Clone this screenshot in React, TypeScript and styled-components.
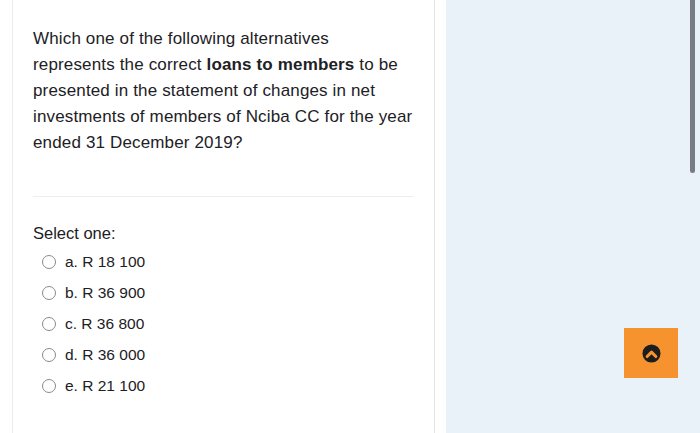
import React from 'react';
import styled, { createGlobalStyle } from 'styled-components';

const GlobalStyle = createGlobalStyle`
  html, body {
    margin: 0;
    padding: 0;
    height: 433px;
    overflow: hidden;
    background: #ffffff;
    font-family: "Liberation Sans", Arial, sans-serif;
    color: #1d2125;
  }
`;

const options = ['a. R 18 100', 'b. R 36 900', 'c. R 36 800', 'd. R 36 000', 'e. R 21 100'];

const App: React.FC = () => {
  return (
    <>
      <GlobalStyle />
      <Page>
        <Main>
          <Card>
            <QuestionText>
              Which one of the following alternatives
              <br />
              represents the correct <strong>loans to members</strong> to be
              <br />
              presented in the statement of changes in net
              <br />
              investments of members of Nciba CC for the year
              <br />
              ended 31 December 2019?
            </QuestionText>

            <Divider />

            <Prompt>Select one:</Prompt>

            <Options>
              {options.map((option) => (
                <Option key={option}>
                  <Radio />
                  <OptionLabel>{option}</OptionLabel>
                </Option>
              ))}
            </Options>
          </Card>
        </Main>

        <Side>
          <ScrollThumb />
          <BackToTop aria-label="Back to top">
            <svg width="19" height="19" viewBox="0 0 20 20">
              <circle cx="10" cy="10" r="9.5" fill="#1d1d1d" />
              <path
                d="M5.4 13.2 L10 8.6 L14.6 13.2"
                fill="none"
                stroke="#f6932f"
                strokeWidth="3.2"
                strokeLinecap="round"
                strokeLinejoin="round"
              />
            </svg>
          </BackToTop>
        </Side>
      </Page>
    </>
  );
};

export default App;

const Page = styled.div`
  display: flex;
  height: 433px;
`;

const Main = styled.div`
  width: 446px;
  flex-shrink: 0;
  background: #ffffff;
  padding-left: 12px;
  box-sizing: border-box;
`;

const Card = styled.div`
  width: 423px;
  height: 100%;
  box-sizing: border-box;
  border-left: 1px solid #ececec;
  border-right: 1px solid #e4e4e4;
  padding: 26px 20px 0 20px;
`;

const QuestionText = styled.p`
  margin: 0;
  font-size: 17px;
  line-height: 26px;
  letter-spacing: 0.15px;
  white-space: nowrap;

  strong {
    font-weight: 700;
  }
`;

const Divider = styled.hr`
  border: none;
  border-top: 1px solid #eeeeee;
  margin: 40px 0 0;
`;

const Prompt = styled.div`
  margin-top: 23px;
  font-size: 16.5px;
  line-height: 26px;
`;

const Options = styled.div`
  display: flex;
  flex-direction: column;
`;

const Option = styled.label`
  display: flex;
  align-items: center;
  height: 31px;
  padding-left: 9px;
`;

const Radio = styled.span`
  width: 14px;
  height: 14px;
  border: 1.5px solid #8a8a8a;
  border-radius: 50%;
  box-sizing: border-box;
  flex-shrink: 0;
`;

const OptionLabel = styled.span`
  margin-left: 9px;
  font-size: 15.5px;
`;

const Side = styled.div`
  flex: 1;
  position: relative;
  background: #eaf2f9;
`;

const ScrollThumb = styled.div`
  position: absolute;
  right: 5px;
  top: 0;
  width: 5px;
  height: 173px;
  background: #777d82;
  border-radius: 0 0 3px 3px;
`;

const BackToTop = styled.button`
  position: absolute;
  left: 178px;
  top: 328px;
  width: 54px;
  height: 50px;
  border: none;
  padding: 0;
  background: #f6932f;
  display: flex;
  align-items: center;
  justify-content: center;
`;
